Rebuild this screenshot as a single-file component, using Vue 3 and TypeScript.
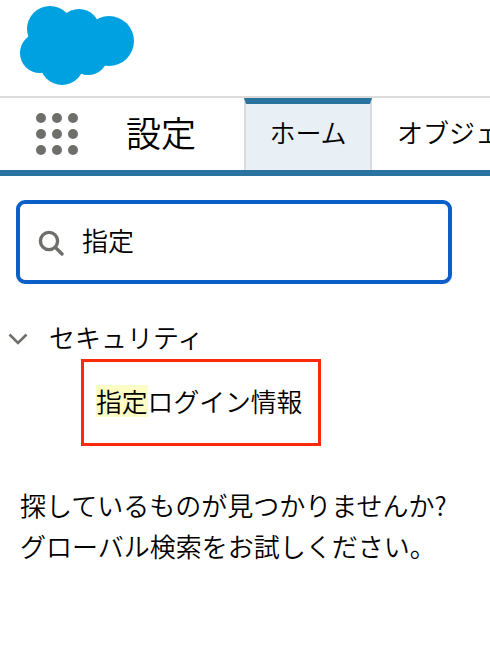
<script setup lang="ts">
const dots: number[][] = [
  [5, 5], [21, 5], [37, 5],
  [5, 21], [21, 21], [37, 21],
  [5, 37], [21, 37], [37, 37],
];
</script>

<template>
  <div class="page">
    <header class="logo-bar">
      <svg class="logo" width="116" height="80" viewBox="0 0 116 80">
        <circle cx="30" cy="23" r="23" />
        <circle cx="59" cy="24" r="21" />
        <circle cx="89" cy="35" r="25" />
        <circle cx="20" cy="47" r="20" />
        <circle cx="42" cy="57" r="22" />
        <circle cx="68" cy="49" r="20" />
        <rect x="24" y="22" width="62" height="30" />
      </svg>
    </header>

    <nav class="nav">
      <button class="launcher" aria-label="App launcher">
        <svg width="42" height="42" viewBox="0 0 42 42">
          <circle v-for="(d, i) in dots" :key="i" :cx="d[0]" :cy="d[1]" r="5" />
        </svg>
      </button>
      <div class="app-name">設定</div>
      <div class="tab active">ホーム</div>
      <div class="tab">オブジェクトマネージャ</div>
    </nav>

    <aside class="side">
      <div class="search">
        <svg class="search-icon" width="28" height="28" viewBox="0 0 28 28">
          <circle cx="12" cy="12" r="8.6" />
          <path d="M18.5 18.5 L25 25" />
        </svg>
        <span>指定</span>
      </div>

      <div class="group">
        <svg class="chevron" width="20" height="12" viewBox="0 0 20 12">
          <path d="M1.5 1.5 L10 10 L18.5 1.5" />
        </svg>
        <span>セキュリティ</span>
      </div>

      <div class="item"><mark>指定</mark>ログイン情報</div>

      <p class="hint">探しているものが見つかりませんか?<br />グローバル検索をお試しください。</p>
    </aside>
  </div>
</template>

<style scoped>
.page {
  width: 490px;
  height: 650px;
  overflow: hidden;
  background: #fff;
  color: #000;
  font-family: "Noto Sans CJK JP", "Liberation Sans", sans-serif;
  font-size: 26px;
  font-weight: 350;
}
.logo-bar {
  height: 96px;
  box-sizing: border-box;
  padding: 6px 0 0 20px;
}
.logo {
  display: block;
  fill: #00a1e0;
}
.nav {
  height: 80px;
  box-sizing: border-box;
  display: flex;
  align-items: stretch;
  border-top: 2px solid #dddbda;
  border-bottom: 6px solid #2a739e;
  overflow: hidden;
}
.launcher {
  width: 126px;
  flex: none;
  padding: 0 0 0 36px;
  border: 0;
  background: none;
  display: flex;
  align-items: center;
}
.launcher svg {
  fill: #706e6b;
}
.app-name {
  width: 118px;
  flex: none;
  font-size: 35px;
  line-height: 68px;
}
.tab {
  flex: none;
  padding: 0 25px;
  line-height: 68px;
  white-space: nowrap;
  font-size: 26px;
}
.tab.active {
  width: 128px;
  box-sizing: border-box;
  padding: 0;
  text-align: center;
  background: #e8f0f5;
  border: solid #dddbda;
  border-width: 6px 2px 0;
  border-top-color: #2a739e;
  line-height: 56px;
}
.side {
  padding: 24px 0 0;
}
.search {
  width: 436px;
  height: 84px;
  margin-left: 16px;
  box-sizing: border-box;
  display: flex;
  align-items: center;
  border: 4px solid #0b5fc7;
  border-radius: 9px;
  padding: 0 0 0 17px;
  font-size: 26px;
}
.search span {
  margin-left: 17px;
  margin-bottom: 6px;
}
.search-icon {
  fill: none;
  stroke: #706e6b;
  stroke-width: 3.4;
  stroke-linecap: round;
  margin-top: 2px;
}
.group {
  display: flex;
  align-items: center;
  height: 40px;
  margin-top: 32px;
  padding-left: 8px;
  font-size: 26px;
}
.group span {
  margin-left: 21px;
}
.chevron {
  fill: none;
  stroke: #706e6b;
  stroke-width: 2.6;
  margin-top: 6px;
}
.item {
  width: 240px;
  height: 87px;
  margin: 3px 0 0 81px;
  box-sizing: border-box;
  border: 3px solid #fb2a0a;
  padding-left: 12px;
  line-height: 78px;
  white-space: nowrap;
  font-size: 25.8px;
}
mark {
  display: inline-block;
  height: 32px;
  line-height: 32px;
  background: #fbfdc4;
  color: inherit;
}
.hint {
  margin: 38px 0 0 20px;
  font-size: 26px;
  line-height: 41px;
  white-space: nowrap;
}
</style>

<style>
html,
body {
  margin: 0;
  background: #fff;
}
</style>
